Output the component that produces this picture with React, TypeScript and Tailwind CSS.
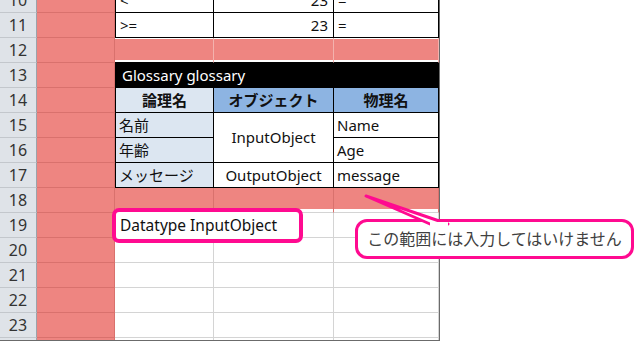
import type { ReactNode } from "react";

const rowNums = [10, 11, 12, 13, 14, 15, 16, 17, 18, 19, 20, 21, 22, 23, 24];

const Head = ({ n }: { n: number }) => (
  <div className="flex items-center justify-center bg-[#dfe3e8] border-r border-r-[#9ca2a9] border-b border-b-[#c3c7cc] text-[16px] text-[#333] leading-none">
    {n}
  </div>
);

const ColA = () => <div className="bg-[#ee8581] border-r border-b border-[#d9716d]" />;

const Cell = ({ children, className = "" }: { children?: ReactNode; className?: string }) => (
  <div className={`flex items-center border-r border-b whitespace-nowrap ${className}`}>{children}</div>
);

export default function App() {
  return (
    <div className="relative w-[638px] h-[342px] bg-white overflow-hidden text-[#111] font-['Noto_Sans','Noto_Sans_CJK_JP',sans-serif]">
      <div className="w-[440px] h-[341px] border-r border-b border-[#6b6b6b] overflow-hidden">
        <div className="grid grid-cols-[37px_78px_99px_120px_105px] auto-rows-[25px] -mt-[12px] text-[15px]">
          {/* 10 */}
          <Head n={10} />
          <ColA />
          <Cell className="border-l border-black pl-[4px]">&lt;</Cell>
          <Cell className="border-black justify-end pr-[5px]">23</Cell>
          <Cell className="border-black pl-[4px]">=</Cell>
          {/* 11 */}
          <Head n={11} />
          <ColA />
          <Cell className="border-l border-black pl-[4px]">&gt;=</Cell>
          <Cell className="border-black justify-end pr-[5px]">23</Cell>
          <Cell className="border-black pl-[4px]">=</Cell>
          {/* 12 */}
          <Head n={12} />
          <ColA />
          {[0, 1, 2].map((i) => (
            <div key={i} className="border-r border-r-[#f3b2ae] border-b border-b-black">
              <div className="mt-[1px] h-[21px] bg-[#ee8581]" />
            </div>
          ))}
          {/* 13 */}
          <Head n={13} />
          <ColA />
          <div className="col-span-3 flex items-center bg-black text-white pl-[6px] border-l border-black">
            Glossary glossary
          </div>
          {/* 14 */}
          <Head n={14} />
          <ColA />
          <Cell className="border-l border-black bg-[#dce6f1] justify-center font-bold">論理名</Cell>
          <Cell className="border-black bg-[#8db4e2] justify-center font-bold">オブジェクト</Cell>
          <Cell className="border-black bg-[#8db4e2] justify-center font-bold">物理名</Cell>
          {/* 15 */}
          <Head n={15} />
          <ColA />
          <Cell className="border-l border-black bg-[#dce6f1] pl-[3px]">名前</Cell>
          <Cell className="row-span-2 border-black justify-center">InputObject</Cell>
          <Cell className="border-black pl-[3px]">Name</Cell>
          {/* 16 */}
          <Head n={16} />
          <ColA />
          <Cell className="border-l border-black bg-[#dce6f1] pl-[3px]">年齢</Cell>
          <Cell className="border-black pl-[3px]">Age</Cell>
          {/* 17 */}
          <Head n={17} />
          <ColA />
          <Cell className="border-l border-black bg-[#dce6f1] pl-[3px]">メッセージ</Cell>
          <Cell className="border-black justify-center">OutputObject</Cell>
          <Cell className="border-black pl-[3px]">message</Cell>
          {/* 18 */}
          <Head n={18} />
          <ColA />
          {[0, 1, 2].map((i) => (
            <div key={i} className="border-r border-r-[#d9716d] border-b border-b-[#d4d4d4]">
              <div className="h-[21px] bg-[#ee8581]" />
            </div>
          ))}
          {/* 19 - 24 */}
          {rowNums.slice(9).map((n) => (
            <div key={n} className="contents">
              <Head n={n} />
              <ColA />
              <Cell className="border-[#d4d4d4]" />
              <Cell className="border-[#d4d4d4]" />
              <Cell className="border-[#d4d4d4]" />
            </div>
          ))}
        </div>
      </div>

      {/* callout around the datatype cell */}
      <div className="absolute left-[112px] top-[208px] w-[191px] h-[35px] rounded-[7px] border-4 border-[#ff0a90] bg-white flex items-center pl-[4px] text-[15.5px] text-[#111] whitespace-nowrap">
        Datatype InputObject
      </div>

      {/* balloon */}
      <div className="absolute left-[355px] top-[219px] w-[279px] h-[40px] rounded-[12px] border-[3px] border-[#ff0a90] bg-white flex items-center justify-center text-[16px] text-[#404040] whitespace-nowrap">
        この範囲には入力してはいけません
      </div>
      <svg className="absolute left-0 top-0 pointer-events-none" width="638" height="342">
        <path
          d="M430 224 L366 196 L448 224"
          fill="#ffffff"
          stroke="#ff0a90"
          strokeWidth="3"
          strokeLinejoin="round"
          strokeLinecap="round"
        />
        <rect x="430" y="222" width="18" height="4" fill="#ffffff" />
      </svg>
    </div>
  );
}
